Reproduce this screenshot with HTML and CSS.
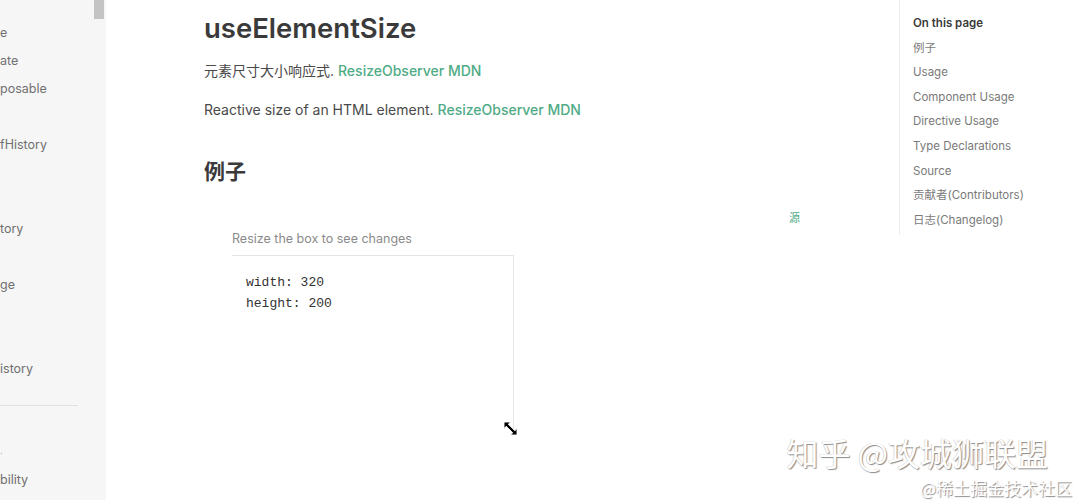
FILE: index.html
```html
<!DOCTYPE html>
<html lang="zh">
<head>
<meta charset="utf-8">
<title>useElementSize</title>
<link rel="stylesheet" href="styles.css">
</head>
<body>
<div class="layout">
  <aside class="sidebar">
    <div class="scrollbar"></div>
    <nav class="side-list">
      <div class="side-item">e</div>
      <div class="side-item">ate</div>
      <div class="side-item">posable</div>
      <div class="side-item"></div>
      <div class="side-item">fHistory</div>
      <div class="side-item"></div>
      <div class="side-item"></div>
      <div class="side-item">tory</div>
      <div class="side-item"></div>
      <div class="side-item">ge</div>
      <div class="side-item"></div>
      <div class="side-item"></div>
      <div class="side-item">istory</div>
      <div class="side-divider"></div>
      <div class="side-cat">.</div>
      <div class="side-item">bility</div>
    </nav>
  </aside>
  <main class="content">
    <h1 class="title">useElementSize</h1>
    <p class="para">元素尺寸大小响应式. <a class="link">ResizeObserver MDN</a></p>
    <p class="para">Reactive size of an HTML element. <a class="link">ResizeObserver MDN</a></p>
    <h2 class="heading">例子</h2>
    <div class="demo">
      <div class="demo-top"><a class="source">源</a></div>
      <div class="demo-note">Resize the box to see changes</div>
      <div class="box">
        <div class="box-text">width: 320<br>height: 200</div>
        <svg class="resize-cursor" width="15" height="15" viewBox="0 0 15 15">
          <path d="M1 1 L7.5 1 L5.3 3.2 L11.8 9.7 L14 7.5 L14 14 L7.5 14 L9.7 11.8 L3.2 5.3 L1 7.5 Z" fill="#000" stroke="#fff" stroke-width="0.9" stroke-linejoin="miter"/>
        </svg>
      </div>
    </div>
  </main>
  <aside class="toc">
    <div class="toc-title">On this page</div>
    <div class="toc-item">例子</div>
    <div class="toc-item">Usage</div>
    <div class="toc-item">Component Usage</div>
    <div class="toc-item">Directive Usage</div>
    <div class="toc-item">Type Declarations</div>
    <div class="toc-item">Source</div>
    <div class="toc-item">贡献者(Contributors)</div>
    <div class="toc-item">日志(Changelog)</div>
  </aside>
</div>
<div class="watermark">
  <div class="wm-big">知乎 @攻城狮联盟</div>
  <div class="wm-small">@稀土掘金技术社区</div>
</div>
</body>
</html>
```

FILE: styles.css
```css
* { box-sizing: border-box; }
html, body { margin: 0; padding: 0; }
body {
  width: 1079px;
  height: 500px;
  overflow: hidden;
  background: #ffffff;
  font-family: Inter, "Noto Sans CJK SC", sans-serif;
  color: #3c3c3c;
}
.layout {
  display: flex;
  height: 500px;
}
.sidebar {
  width: 106px;
  flex: none;
  background: #f6f6f6;
  position: relative;
  overflow: hidden;
}
.scrollbar {
  position: absolute;
  top: 0;
  right: 2px;
  width: 10px;
  height: 19px;
  background: #c4c4c4;
}
.side-list {
  padding-top: 19px;
  width: 78px;
}
.side-item {
  height: 28px;
  line-height: 28px;
  font-size: 12.5px;
  color: #707070;
  white-space: nowrap;
}
.side-divider {
  height: 1px;
  background: #e0e0e0;
  margin: 22px 0 36px;
}
.side-cat {
  height: 24px;
  line-height: 16px;
  font-size: 10px;
  color: #aaa;
}
.content {
  flex: 1;
  padding-left: 98px;
  padding-top: 11px;
}
.title {
  margin: 0;
  font-size: 27.5px;
  line-height: 34px;
  font-weight: 600;
  color: #3a3a3a;
}
.para {
  margin: 13px 0 0;
  font-size: 14px;
  line-height: 26px;
  color: #4a4a4a;
}
.para + .para { margin-top: 13px; }
.link {
  color: #4fab86;
  font-weight: 500;
  text-decoration: none;
}
.heading {
  margin: 34px 0 0;
  font-size: 21px;
  line-height: 30px;
  font-weight: 700;
  color: #3a3a3a;
}
.demo {
  width: 636px;
  margin-top: 22px;
  padding: 0 28px;
}
.demo-top {
  display: flex;
  justify-content: flex-end;
  padding-right: 12px;
  height: 18px;
}
.source {
  font-size: 11px;
  line-height: 18px;
  color: #4fab86;
}
.demo-note {
  margin-top: 3px;
  font-size: 12.5px;
  line-height: 18px;
  color: #8a8a8a;
}
.box {
  position: relative;
  margin-top: 7px;
  width: 282px;
  height: 177px;
  border-top: 1px solid #e4e4e4;
  border-right: 1px solid #e4e4e4;
  padding: 16px 14px;
}
.box-text {
  font-family: "Liberation Mono", "DejaVu Sans Mono", monospace;
  font-size: 13px;
  line-height: 21px;
  color: #333;
}
.resize-cursor {
  position: absolute;
  right: -5px;
  bottom: -4px;
}
.toc {
  width: 180px;
  flex: none;
  height: 235px;
  border-left: 1px solid #ececec;
  padding: 14px 0 0 13px;
}
.toc-title {
  font-size: 11.5px;
  line-height: 18px;
  font-weight: 600;
  color: #3a3a3a;
}
.toc-item {
  font-size: 11.5px;
  line-height: 18px;
  margin-top: 6.6px;
  color: #7a7a7a;
  white-space: nowrap;
}
.watermark {
  position: absolute;
  right: 7px;
  bottom: 0;
  text-align: right;
  color: #ffffff;
  font-family: "Noto Sans CJK SC", sans-serif;
}
.wm-big {
  font-size: 32px;
  line-height: 46px;
  text-shadow: 1px 1px 1px #8a8a8a, -0.5px -0.5px 0 #c8c8c8;
  margin-right: 24px;
}
.wm-small {
  font-size: 17px;
  line-height: 25px;
  text-shadow: 1px 1px 1px #8a8a8a;
}
```
